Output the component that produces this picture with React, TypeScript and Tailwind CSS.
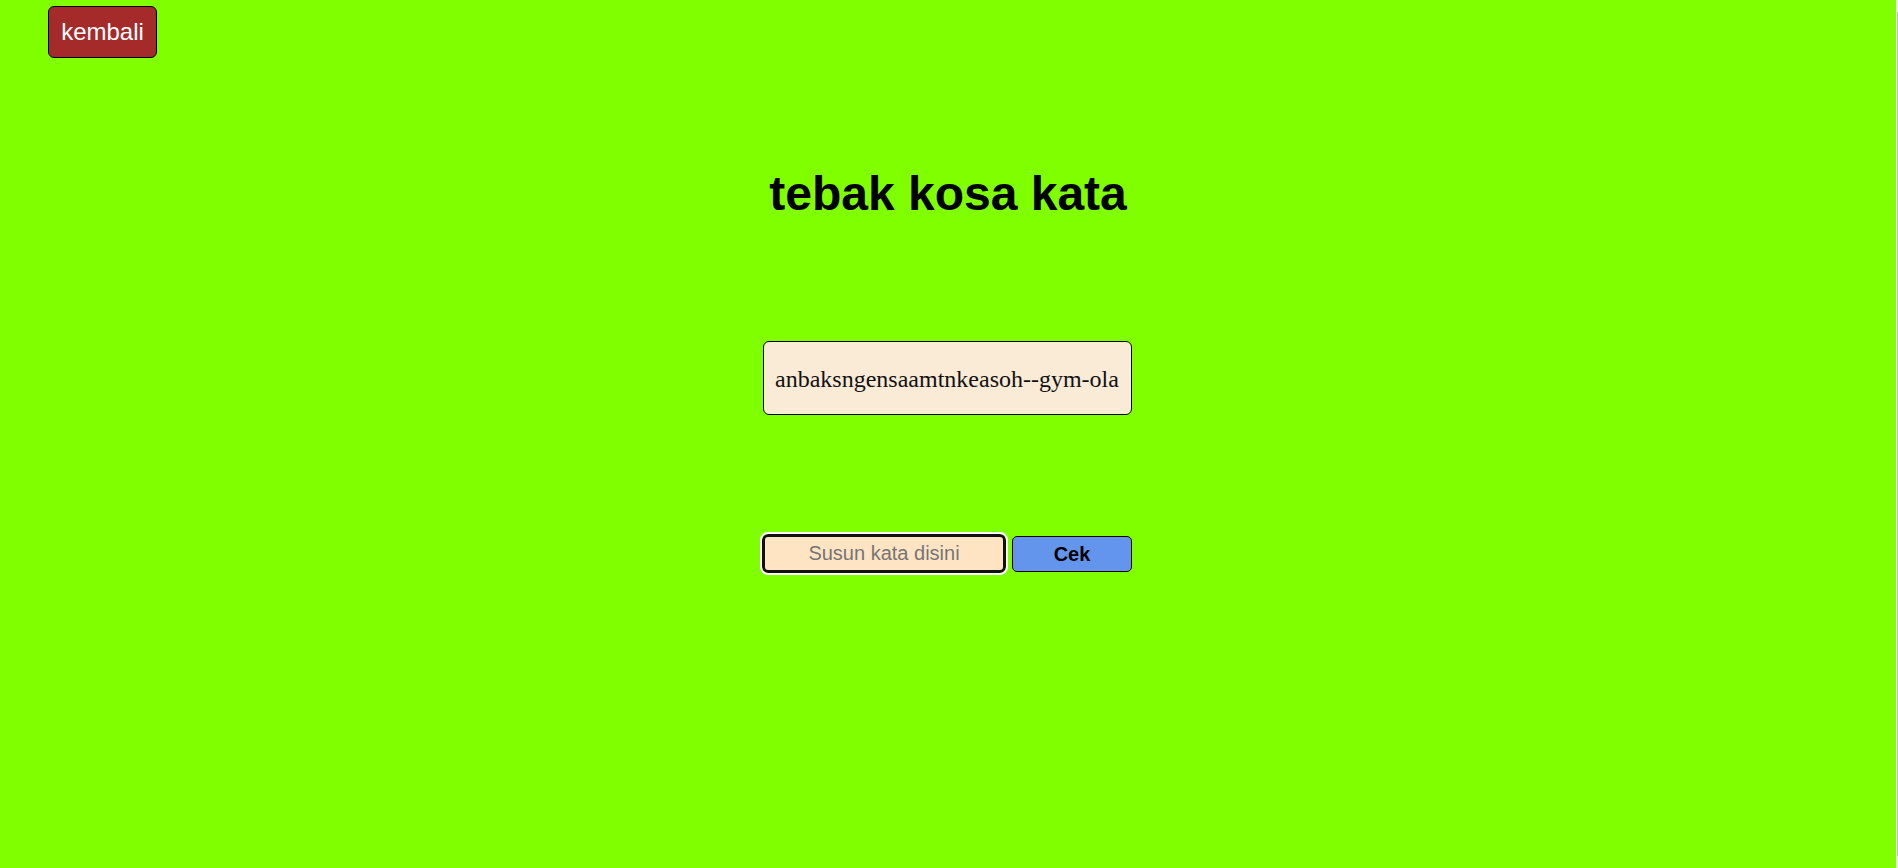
import React from 'react';

const SCRAMBLED = 'anbaksngensaamtnkeasoh--gym-ola';

const App = () => {
  return (
    <div className="w-full h-[868px] flex bg-[#f1f1f1] overflow-hidden">
      <div className="flex-1 h-full bg-[#7fff00] flex flex-col font-['Liberation_Sans',Arial,sans-serif]">
        <div className="pl-[48px] pt-[6px]">
          <button className="w-[109px] h-[52px] bg-[#a52a2a] text-white text-[24px] border border-black rounded-[6px] flex items-center justify-center">
            kembali
          </button>
        </div>

        <h1 className="mt-[100px] text-center text-[48px] font-bold text-black">tebak kosa kata</h1>

        <div className="mt-[111px] flex justify-center pr-[2px]">
          <div className="w-[369px] h-[74px] bg-[#faebd7] border border-black rounded-[6px] flex items-center justify-center pt-[2px] font-['Liberation_Serif','Times_New_Roman',serif] text-[24px] text-[#111]">
            {SCRAMBLED}
          </div>
        </div>

        <div className="mt-[119px] flex justify-center items-center gap-[6px] pr-[2px]">
          <input
            type="text"
            placeholder="Susun kata disini"
            className="w-[244px] h-[39px] bg-[#ffe4c4] border-[3px] border-[#101010] rounded-[6px] outline-2 outline-solid outline-white text-center text-[20px] placeholder:text-[#757575] font-['Liberation_Sans',Arial,sans-serif]"
          />
          <button className="w-[120px] h-[36px] bg-[#6495ed] border border-black rounded-[5px] text-[20px] font-bold text-black flex items-center justify-center">
            Cek
          </button>
        </div>
      </div>
      <div className="w-[2px] h-full bg-[#f1f1f1] flex justify-end pt-[12px] pb-[12px]">
        <div className="w-[1px] h-full bg-[#c1c1c1]" />
      </div>
    </div>
  );
};

export default App;
